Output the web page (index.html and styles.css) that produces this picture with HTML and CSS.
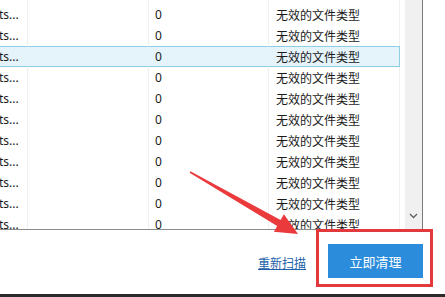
FILE: index.html
```html
<!DOCTYPE html>
<html lang="zh-CN">
<head>
<meta charset="utf-8">
<title>清理</title>
<link rel="stylesheet" href="styles.css">
</head>
<body>
<div class="window">
  <div class="list">
    <div class="rows">
      <div class="row spacer"><div class="c c1"></div><div class="c c2"></div><div class="c c3"></div><div class="c c4"></div><div class="c c5"></div></div>
      <div class="row"><div class="c c1"><span class="cut">ts...</span></div><div class="c c2"></div><div class="c c3">0</div><div class="c c4">无效的文件类型</div><div class="c c5"></div></div>
      <div class="row"><div class="c c1"><span class="cut">ts...</span></div><div class="c c2"></div><div class="c c3">0</div><div class="c c4">无效的文件类型</div><div class="c c5"></div></div>
      <div class="row sel"><div class="c c1"><span class="cut">ts...</span></div><div class="c c2"></div><div class="c c3">0</div><div class="c c4">无效的文件类型</div><div class="c c5"></div></div>
      <div class="row"><div class="c c1"><span class="cut">ts...</span></div><div class="c c2"></div><div class="c c3">0</div><div class="c c4">无效的文件类型</div><div class="c c5"></div></div>
      <div class="row"><div class="c c1"><span class="cut">ts...</span></div><div class="c c2"></div><div class="c c3">0</div><div class="c c4">无效的文件类型</div><div class="c c5"></div></div>
      <div class="row"><div class="c c1"><span class="cut">ts...</span></div><div class="c c2"></div><div class="c c3">0</div><div class="c c4">无效的文件类型</div><div class="c c5"></div></div>
      <div class="row"><div class="c c1"><span class="cut">ts...</span></div><div class="c c2"></div><div class="c c3">0</div><div class="c c4">无效的文件类型</div><div class="c c5"></div></div>
      <div class="row"><div class="c c1"><span class="cut">ts...</span></div><div class="c c2"></div><div class="c c3">0</div><div class="c c4">无效的文件类型</div><div class="c c5"></div></div>
      <div class="row"><div class="c c1"><span class="cut">ts...</span></div><div class="c c2"></div><div class="c c3">0</div><div class="c c4">无效的文件类型</div><div class="c c5"></div></div>
      <div class="row"><div class="c c1"><span class="cut">ts...</span></div><div class="c c2"></div><div class="c c3">0</div><div class="c c4">无效的文件类型</div><div class="c c5"></div></div>
      <div class="row"><div class="c c1"><span class="cut">ts...</span></div><div class="c c2"></div><div class="c c3">0</div><div class="c c4">无效的文件类型</div><div class="c c5"></div></div>
    </div>
    <div class="scrollbar">
      <div class="sb-down">
        <svg width="9" height="6" viewBox="0 0 9 6"><path d="M1 1 L4.5 4.5 L8 1" fill="none" stroke="#606060" stroke-width="1.3"/></svg>
      </div>
    </div>
  </div>
  <div class="footer">
    <a class="rescan" href="#">重新扫描</a>
    <button class="clean">立即清理</button>
  </div>
  <div class="taskbar"></div>

  <div class="highlight-box"></div>
  <svg class="arrow" width="445" height="297" viewBox="0 0 445 297">
    <polygon points="189.6,172.7 190.4,171.3 280.6,220 283.9,214.3 298,234 273.9,231.7 277.2,226" fill="#ea3a3c"/>
  </svg>
</div>
</body>
</html>
```

FILE: styles.css
```css
* { box-sizing: border-box; }
html, body { margin: 0; padding: 0; background: #fff; }
body { width: 445px; height: 297px; overflow: hidden; }

.window {
  position: relative;
  width: 445px;
  height: 297px;
  display: flex;
  flex-direction: column;
  background: #fff;
  font-family: "Noto Sans", "Noto Sans CJK SC", sans-serif;
  font-size: 12px;
  color: #1a1a1a;
}

.list {
  width: 423px;
  height: 230px;
  flex: none;
  display: flex;
  border-right: 1px solid #7a7a7a;
  border-bottom: 1px solid #8c8c8c;
  overflow: hidden;
}

.rows { width: 405px; flex: none; }

.row {
  display: grid;
  grid-template-columns: 28px 121px 120px 131px 5px;
  height: 21px;
}
.row.spacer { height: 4px; }

.c {
  border-right: 1px solid #f0f0f0;
  display: flex;
  align-items: center;
  white-space: nowrap;
  overflow: hidden;
}
.c5 { border-right: none; }
.c1 .cut { margin-left: -1px; }
.c3 { padding-left: 6px; }
.c4 { padding-left: 7px; font-family: "Noto Sans CJK SC", sans-serif; }

.row.sel .c1, .row.sel .c2, .row.sel .c3, .row.sel .c4 {
  background: #e5f3fb;
  border-top: 1px solid #8fcde4;
  border-bottom: 1px solid #8fcde4;
  border-right-color: transparent;
}
.row.sel .c4 { border-right-color: #8fcde4; }

.scrollbar {
  width: 17px;
  flex: none;
  background: #f0f0f0;
  display: flex;
  flex-direction: column;
  justify-content: flex-end;
}
.sb-down {
  height: 17px;
  display: flex;
  align-items: flex-start;
  justify-content: center;
  padding-top: 1px;
}

.footer {
  height: 64px;
  flex: none;
  display: flex;
  justify-content: flex-end;
  align-items: center;
  gap: 22px;
  padding: 0 22px 2px 0;
}
.rescan {
  color: #1c5fa8;
  text-decoration: underline;
  font-family: "Noto Sans CJK SC", sans-serif;
  font-size: 12px;
  margin-top: 2px;
}
.clean {
  width: 95px;
  height: 34px;
  border: none;
  background: #2b8cdb;
  color: #fff;
  font-family: "Noto Sans CJK SC", sans-serif;
  font-size: 13px;
  padding: 0;
}

.taskbar {
  height: 3px;
  flex: none;
  background: #2b2b2b;
}

.highlight-box {
  position: absolute;
  left: 316px;
  top: 229px;
  width: 117px;
  height: 58px;
  border: 3px solid #e2393d;
}

.arrow {
  position: absolute;
  left: 0;
  top: 0;
  pointer-events: none;
}
```
